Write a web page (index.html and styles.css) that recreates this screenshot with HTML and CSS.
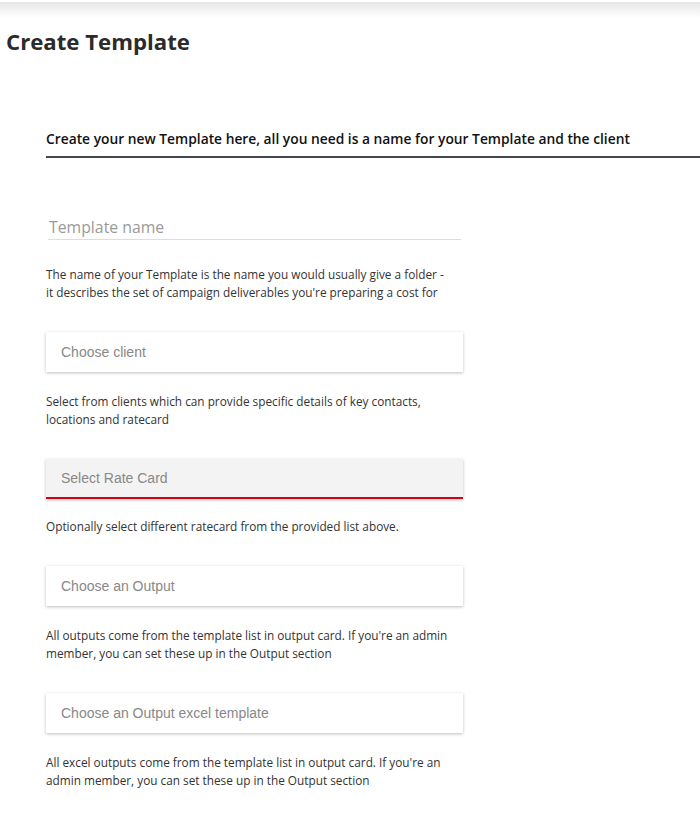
FILE: index.html
```html
<!DOCTYPE html>
<html lang="en">
<head>
    <meta charset="UTF-8">
    <meta name="viewport" content="width=device-width, initial-scale=1.0">
    <title>Create Template</title>
    <link rel="stylesheet" href="styles.css">
</head>
<body>
    <div class="topbar"></div>
    <h1 class="page-title">Create Template</h1>

    <div class="intro">
        <h2>Create your new Template here, all you need is a name for your Template and the client</h2>
    </div>

    <form class="template-form">
        <div class="field">
            <input type="text" class="name-input" placeholder="Template name">
            <p class="hint first">The name of your Template is the name you would usually give a folder -<br>it describes the set of campaign deliverables you're preparing a cost for</p>
        </div>

        <div class="field">
            <div class="select-box">Choose client</div>
            <p class="hint">Select from clients which can provide specific details of key contacts,<br>locations and ratecard</p>
        </div>

        <div class="field">
            <div class="select-box active">Select Rate Card</div>
            <p class="hint">Optionally select different ratecard from the provided list above.</p>
        </div>

        <div class="field">
            <div class="select-box">Choose an Output</div>
            <p class="hint">All outputs come from the template list in output card. If you're an admin<br>member, you can set these up in the Output section</p>
        </div>

        <div class="field">
            <div class="select-box">Choose an Output excel template</div>
            <p class="hint">All excel outputs come from the template list in output card. If you're an<br>admin member, you can set these up in the Output section</p>
        </div>
    </form>
</body>
</html>
```

FILE: styles.css
```css
body {
    margin: 0;
    font-family: "Open Sans", Arial, sans-serif;
    color: #333;
    background: #fff;
}

.topbar {
    height: 16px;
    border-top: 2px solid #fff;
    background: linear-gradient(to bottom, #e6e6e6, #fff);
}

.page-title {
    margin: 8px 0 0 6px;
    font-size: 22.2px;
    font-weight: 700;
    color: #2b2b2b;
    line-height: 32px;
}

.intro {
    margin: 71px 0 0 46px;
    border-bottom: 2px solid #45464e;
    padding-bottom: 7px;
}

.intro h2 {
    margin: 0;
    font-size: 13.8px;
    font-weight: 600;
    color: #111;
    line-height: 20px;
}

.template-form {
    width: 417px;
    margin: 54px 0 0 46px;
}

.field {
    margin-bottom: 31px;
}

.name-input {
    display: block;
    width: 413px;
    margin-left: 2px;
    padding: 4px 0 1px 1px;
    border: none;
    border-bottom: 1px solid #ddd;
    font-family: "Open Sans", Arial, sans-serif;
    font-size: 15.8px;
    color: #333;
    outline: none;
    box-sizing: border-box;
}

.name-input::placeholder {
    color: #9a9a9a;
}

.select-box {
    height: 40px;
    padding: 0 15px;
    line-height: 40px;
    background: #fff;
    box-shadow: 0 1px 3px rgba(0, 0, 0, 0.25);
    font-family: "Liberation Sans", Arial, sans-serif;
    font-size: 14px;
    color: #888;
    box-sizing: border-box;
}

.select-box.active {
    background: #f3f3f3;
    border-bottom: 2px solid #d0021b;
    line-height: 38px;
}

.hint {
    margin: 20px 0 0;
    font-size: 11.8px;
    line-height: 18px;
    color: #333;
}

.hint.first {
    margin-top: 25px;
}

.select-box.active + .hint {
    margin-top: 18px;
}
```
